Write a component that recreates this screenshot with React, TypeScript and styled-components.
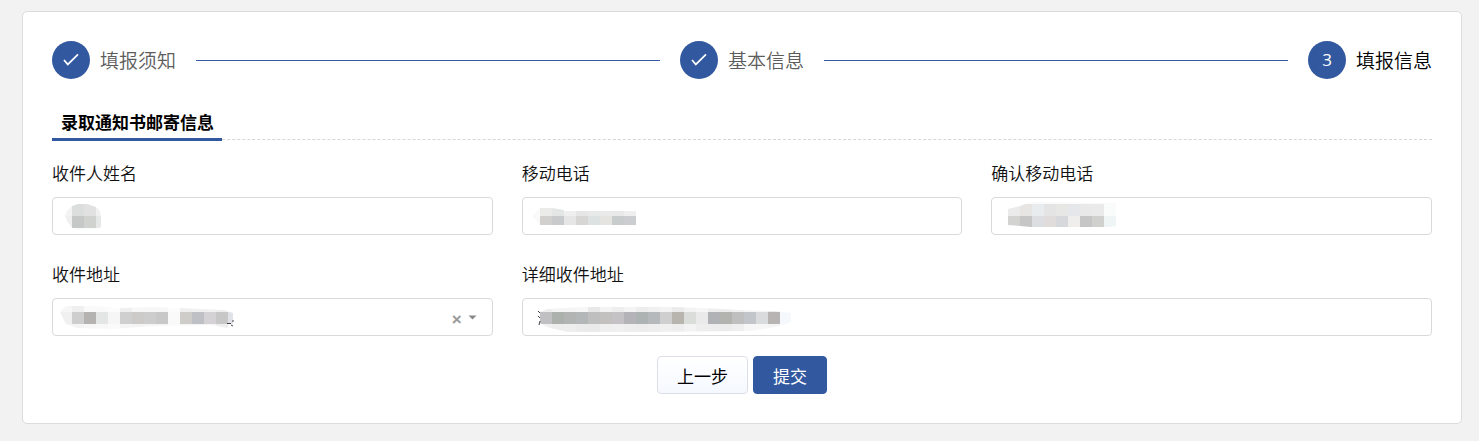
import React from "react";
import styled, { createGlobalStyle, css } from "styled-components";

const GlobalStyle = createGlobalStyle`
  *, *::before, *::after { box-sizing: border-box; }
  body {
    margin: 0;
    background: #f2f2f2;
    color: #222;
    font-family: "Noto Sans", "Noto Sans CJK SC", sans-serif;
    font-size: 17px;
    font-weight: 350;
  }
  button, input, select { font: inherit; }
`;

const Page = styled.main`
  padding: 11px 17px 17px 22px;
`;

const Card = styled.section`
  padding: 29px;
  background: #fff;
  border: 1px solid #dcdcdc;
  border-radius: 5px;
`;

const Steps = styled.ol`
  display: flex;
  align-items: center;
  gap: 20px;
  margin: 0;
  padding: 0;
  list-style: none;
`;

const Step = styled.li<{ $current?: boolean }>`
  display: flex;
  align-items: center;
  gap: 10px;
  flex: none;
  font-size: 19px;
  line-height: 36px;
  color: ${(p) => (p.$current ? "#000" : "#5c5c5c")};
`;

const StepName = styled.span`
  padding-top: 2px;
`;

const StepLine = styled.li`
  flex: 1;
  height: 1px;
  background: #32589f;
`;

const StepBadge = styled.span`
  display: flex;
  align-items: center;
  justify-content: center;
  width: 38px;
  height: 38px;
  border-radius: 50%;
  background: #32589f;
  color: #fff;
  font-family: "Open Sans", sans-serif;
  font-weight: 400;
  font-size: 17px;
`;

const SectionHead = styled.header`
  display: flex;
  margin: 28px 0 20px;
  border-bottom: 1px dashed #d6d6d6;
`;

const SectionTitle = styled.h2`
  margin: 0 0 -2px;
  padding: 0 8px 0 9px;
  border-bottom: 3px solid #32589f;
  font-size: 17px;
  font-weight: 700;
  line-height: 31px;
  color: #000;
`;

const Fields = styled.div`
  display: grid;
  grid-template-columns: repeat(3, minmax(0, 1fr));
  gap: 26px 29px;
`;

const Field = styled.div<{ $span?: number }>`
  display: flex;
  flex-direction: column;
  gap: 10px;
  grid-column: span ${(p) => p.$span ?? 1};
`;

const Label = styled.label`
  line-height: 27px;
  color: #111;
`;

const Control = styled.div`
  position: relative;
  display: flex;
`;

const controlStyle = css`
  width: 100%;
  height: 38px;
  padding: 0 15px;
  border: 1px solid #d9d9d9;
  border-radius: 4px;
  background: #fff;
  color: #222;
`;

const TextInput = styled.input`
  ${controlStyle}
`;

const Select = styled.select`
  ${controlStyle}
  appearance: none;
`;

const SelectTools = styled.div`
  position: absolute;
  top: 0;
  right: 16px;
  height: 100%;
  display: flex;
  align-items: center;
  gap: 6px;
`;

const ClearButton = styled.button`
  padding: 5px 0 0;
  border: 0;
  background: none;
  color: #999;
  font-family: "Liberation Sans", sans-serif;
  font-size: 17px;
  font-weight: 700;
  line-height: 17px;
`;

const Redaction = styled.svg`
  position: absolute;
  top: 0;
  left: 0;
  pointer-events: none;
`;

const Actions = styled.div`
  display: flex;
  justify-content: center;
  gap: 5px;
  margin-top: 20px;
`;

const Button = styled.button<{ $primary?: boolean }>`
  height: 38px;
  padding: 0 19px;
  border: 1px solid ${(p) => (p.$primary ? "#32589f" : "#dcdfe8")};
  border-radius: 4px;
  background: ${(p) => (p.$primary ? "#32589f" : "linear-gradient(#fff, #f5f9ff)")};
  color: ${(p) => (p.$primary ? "#fff" : "#000")};
  font-weight: 400;
`;

type Row = { y: number; h: number; colors: string[] };

const CELL = 12;

// Pixelated cover over a private value: rows of cells cut to a brushed outline.
function Mosaic({ id, x, rows, outline, ink }: { id: string; x: number; rows: Row[]; outline: string; ink?: string }) {
  return (
    <Redaction width="280" height="38" aria-hidden="true">
      <clipPath id={id}>
        <polygon points={outline} />
      </clipPath>
      <g clipPath={`url(#${id})`} shapeRendering="crispEdges">
        {rows.map((row) =>
          row.colors.map((color, i) => (
            <rect key={`${row.y}-${i}`} x={x + i * CELL} y={row.y} width={CELL} height={row.h} fill={color} />
          )),
        )}
      </g>
      {ink && <path d={ink} stroke="#45424a" fill="none" />}
    </Redaction>
  );
}

const nameRows: Row[] = [
  { y: 7, h: 12, colors: ["#f3f3f3", "#dcdddd", "#e1e1e1", "#f0f0f0"] },
  { y: 19, h: 12, colors: ["#f0f0f0", "#c6c8c7", "#d0d2d0", "#e6e7e7"] },
  { y: 31, h: 3, colors: ["#fafcfb", "#fafcfb", "#fafcfb", "#fafcfb"] },
];

const phoneRows: Row[] = [
  { y: 11, h: 8, colors: ["#fafafa", "#ebebea", "#e3e6e5", "#efefef", "#e6e6e6", "#e8e9e9", "#eaeaea", "#e9e9e9", "#efefef"] },
  { y: 19, h: 9, colors: ["#fafafa", "#d1d0cf", "#c9cacc", "#e6e6e6", "#d8d6d5", "#dce1e2", "#e5e4e1", "#c8cccd", "#cccdd0"] },
];

const confirmRows: Row[] = [
  { y: 5, h: 2, colors: Array(9).fill("#fafafa") },
  { y: 7, h: 12, colors: ["#ebebeb", "#e6e5e4", "#e9ecee", "#e4e4e5", "#e7e7e5", "#e5e7eb", "#e9e9e9", "#eaeaea", "#fafcfc"] },
  { y: 19, h: 11, colors: ["#d3d3d2", "#c6c6c6", "#dcdee1", "#e0dcdb", "#d7d8dc", "#efeeec", "#c6c6c6", "#d0d0cf", "#eff4f5"] },
];

const regionRows: Row[] = [
  { y: 8, h: 6, colors: ["#f6f6f6", "#efefef", "#fafafa", "#fafafa", "#fcfcfc", "#efefef", "#f7f7f7", "#f7f7f7", "#f7f7f7", "#fcfcfc", "#efefef", "#f1f1f1", "#f1f1f1", "#eeeeee", "#f5f5f5"] },
  { y: 14, h: 12, colors: ["#f0f0f0", "#cecece", "#b5b3b1", "#e3e6e5", "#f6f6f6", "#cfcfcf", "#cdcbca", "#cdcdcd", "#c8c8c8", "#fafafa", "#cecdc9", "#bfc0c5", "#d4d2d4", "#c7c7c7", "#e0e2e8"] },
  { y: 26, h: 5, colors: ["#f6f6f6", "#f4f4f4", "#f7f7f7", "#f8f8f8", "#fafafa", "#f5f5f5", "#f4f4f4", "#f5f5f5", "#f5f5f5", "#fafafa", "#f4f4f4", "#f5f5f5", "#f5f5f5", "#eeeeee", "#ffffff"] },
];

const addressRows: Row[] = [
  { y: 9, h: 5, colors: ["#eeeeee", "#f4f4f4", "#f5f5f5", "#f7f7f7", "#e9e8e8", "#f3f3f3", "#eeeeee", "#f4f4f4", "#ededed", "#f0f0f0", "#f3f3f3", "#ebebeb", "#f3f3f3", "#f6f6f6", "#eeeeee", "#ededed", "#f1f1f1", "#f5f5f5", "#f6f6f6", "#ebebeb", "#fafafa"] },
  { y: 14, h: 12, colors: ["#c0bfc1", "#acb1ad", "#b2b4b4", "#b4b7b7", "#c0bfc0", "#c3c0c0", "#c4c2c4", "#b4b4b8", "#adb3b3", "#b5b9bb", "#cfcfcf", "#b8b4ae", "#dbdddb", "#eaeaea", "#b1b2b5", "#b3b4af", "#bfbfbf", "#c2c5ca", "#dadbdc", "#b8b4b3", "#f5f9fd"] },
  { y: 26, h: 8, colors: ["#f0f0f0", "#eeeeee", "#eeeeee", "#ebebeb", "#eaeaea", "#efefef", "#f0f0f0", "#eeeeee", "#ededed", "#eeeeee", "#f0f0f0", "#eeeeee", "#f3f3f3", "#eeeeee", "#ededed", "#ececec", "#efefef", "#f7f7f7", "#f7f7f7", "#f5f5f5", "#fafafa"] },
];

function CheckMark() {
  return (
    <svg width="16" height="14" viewBox="0 0 16 14" fill="none" stroke="#fff" strokeWidth="1.7" aria-hidden="true">
      <path d="M1 7 L4.8 11.4 L15 1.4" />
    </svg>
  );
}

export default function App() {
  return (
    <>
      <GlobalStyle />
      <Page>
        <Card>
          <Steps>
            <Step>
              <StepBadge><CheckMark /></StepBadge>
              <StepName>填报须知</StepName>
            </Step>
            <StepLine aria-hidden="true" />
            <Step>
              <StepBadge><CheckMark /></StepBadge>
              <StepName>基本信息</StepName>
            </Step>
            <StepLine aria-hidden="true" />
            <Step $current aria-current="step">
              <StepBadge>3</StepBadge>
              <StepName>填报信息</StepName>
            </Step>
          </Steps>

          <SectionHead>
            <SectionTitle>录取通知书邮寄信息</SectionTitle>
          </SectionHead>

          <form onSubmit={(e) => e.preventDefault()}>
            <Fields>
              <Field>
                <Label htmlFor="name">收件人姓名</Label>
                <Control>
                  <TextInput id="name" />
                  <Mosaic id="name-mask" x={8} rows={nameRows} outline="13,19 15,14 20,9 26,7 35,7 44,10 48,14 49,20 49,30 45,32 36,33 25,33 20,31 15,24" />
                </Control>
              </Field>
              <Field>
                <Label htmlFor="phone">移动电话</Label>
                <Control>
                  <TextInput id="phone" type="tel" />
                  <Mosaic id="phone-mask" x={6} rows={phoneRows} outline="10,19 18,11 30,11 42,13 42,14 114,14 114,28 18,28" />
                </Control>
              </Field>
              <Field>
                <Label htmlFor="confirm">确认移动电话</Label>
                <Control>
                  <TextInput id="confirm" type="tel" />
                  <Mosaic id="confirm-mask" x={17} rows={confirmRows} outline="17,12 29,9 40,5 125,6 125,29 116,30 40,30 29,29 17,28" />
                </Control>
              </Field>
              <Field>
                <Label htmlFor="region">收件地址</Label>
                <Control>
                  <Select id="region" />
                  <Mosaic id="region-mask" x={8} rows={regionRows} outline="8,14 14,8 44,8 68,10 104,9 150,11 172,12 181,15 181,26 175,30 160,27 100,28 60,31 25,30 14,26" ink="M175 25.5h4 M179 27l2 1 M181 22v2" />
                  <SelectTools>
                    <ClearButton type="button" aria-label="清除">×</ClearButton>
                    <svg width="9" height="5" viewBox="0 0 9 5" aria-hidden="true">
                      <path d="M0.5 0.5h8L4.5 4.5z" fill="#888" />
                    </svg>
                  </SelectTools>
                </Control>
              </Field>
              <Field $span={2}>
                <Label htmlFor="address">详细收件地址</Label>
                <Control>
                  <TextInput id="address" />
                  <Mosaic id="address-mask" x={18} rows={addressRows} outline="18,14 25,11 60,9 150,9 180,10 220,12 252,13 269,15 269,24 258,28 230,33 120,34 45,34 25,29 18,25" ink="M16 13l2 2 M16 18l2 2 M18 23l-1 4" />
                </Control>
              </Field>
            </Fields>
            <Actions>
              <Button type="button">上一步</Button>
              <Button type="submit" $primary>提交</Button>
            </Actions>
          </form>
        </Card>
      </Page>
    </>
  );
}
